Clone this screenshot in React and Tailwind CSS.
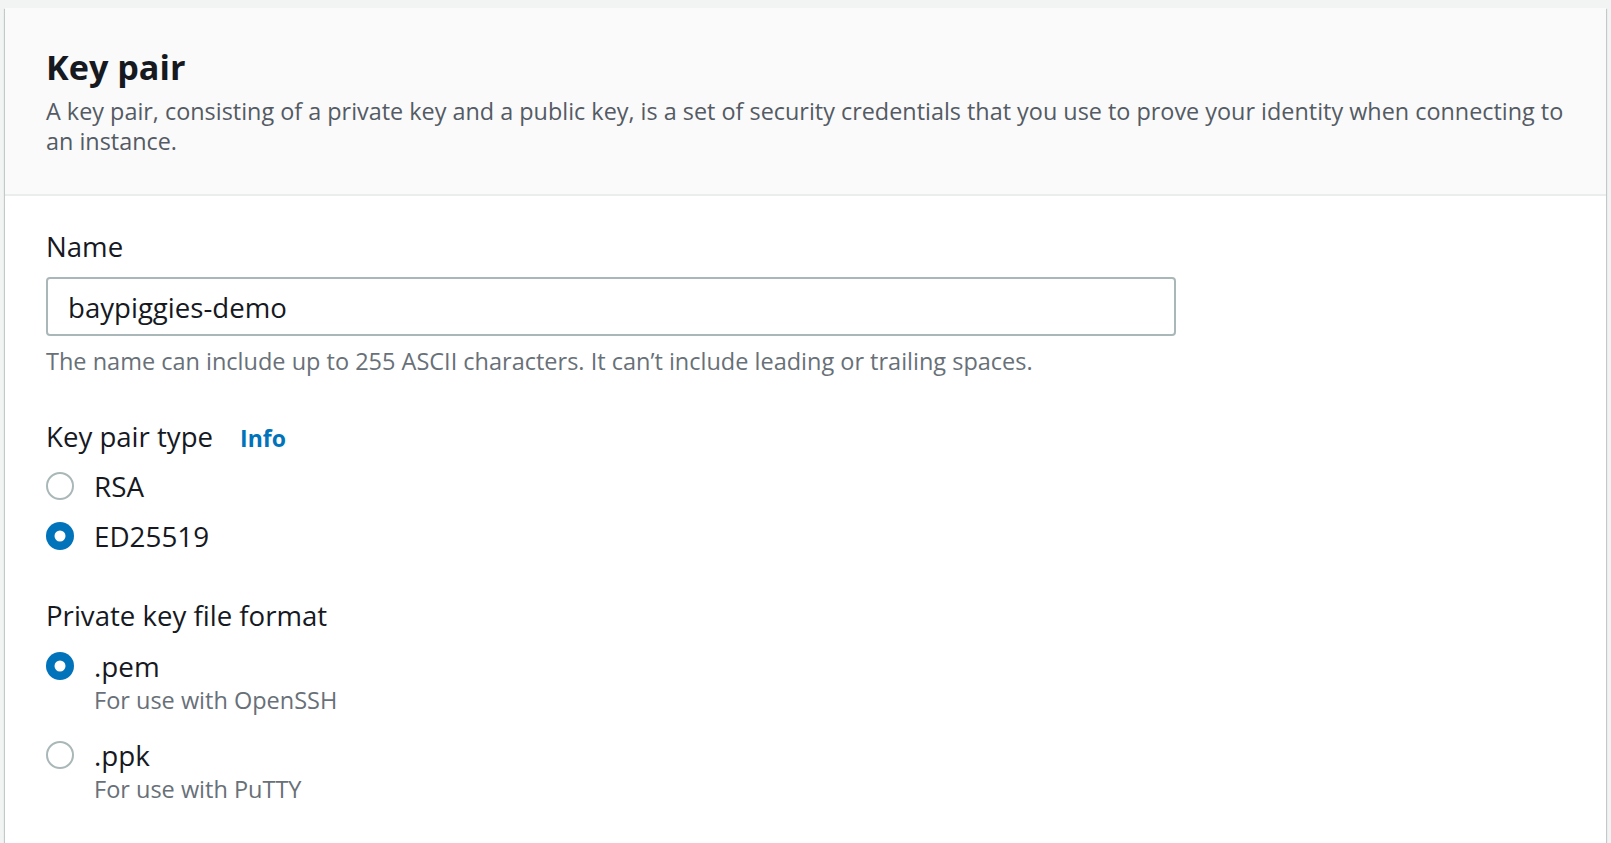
import { useState } from "react";

const font = { fontFamily: '"Open Sans", "Noto Sans", sans-serif' };

function Radio({ checked }) {
  return (
    <svg width="28" height="28" viewBox="0 0 28 28" className="shrink-0">
      {checked ? (
        <>
          <circle cx="14" cy="14" r="14" fill="#0073bb" />
          <circle cx="14" cy="14" r="5.5" fill="#ffffff" />
        </>
      ) : (
        <circle cx="14" cy="14" r="13" fill="#ffffff" stroke="#aab7b8" strokeWidth="2" />
      )}
    </svg>
  );
}

function Option({ label, description, checked, onSelect, className = "" }) {
  return (
    <div className={className}>
      <button type="button" onClick={onSelect} className="flex items-center h-[36px] cursor-pointer">
        <Radio checked={checked} />
        <span className="ml-[20px] text-[27.8px] leading-[36px] text-[#16191f]">{label}</span>
      </button>
      {description && (
        <div className="ml-[48px] mt-[1px] text-[23.5px] leading-[30px] text-[#687078]">{description}</div>
      )}
    </div>
  );
}

export default function App() {
  const [name, setName] = useState("baypiggies-demo");
  const [keyType, setKeyType] = useState("ED25519");
  const [format, setFormat] = useState("pem");

  return (
    <div className="min-h-screen bg-[#f2f3f3] px-[5px] pt-[8px] overflow-hidden" style={font}>
      <div className="bg-white shadow-[0_1px_1px_0_rgba(0,28,36,0.3),1px_1px_1px_0_rgba(0,28,36,0.15),-1px_1px_1px_0_rgba(0,28,36,0.15)]">
        {/* Header */}
        <div className="bg-[#fafafa] border-b-2 border-[#eaeded] pl-[41px] pr-[24px] pt-[38px] pb-[38px]">
          <h2 className="text-[34.2px] leading-[42px] font-bold text-[#16191f]">Key pair</h2>
          <p className="mt-[8px] text-[23.4px] leading-[30px] text-[#545b64]">
            A key pair, consisting of a private key and a public key, is a set of security credentials that you use to prove your identity when connecting to an instance.
          </p>
        </div>

        {/* Body */}
        <div className="pl-[41px] pr-[40px] pt-[32px] pb-[60px]">
          <label className="block text-[27.6px] leading-[36px] text-[#16191f]">Name</label>
          <input
            value={name}
            onChange={(e) => setName(e.target.value)}
            className="mt-[13px] block w-[1130px] h-[59px] border-2 border-[#aab7b8] rounded-[4px] bg-white pl-[20px] text-[27.6px] text-[#16191f] outline-none"
            style={font}
          />
          <div className="mt-[10px] text-[23.5px] leading-[30px] text-[#687078]">
            The name can include up to 255 ASCII characters. It can’t include leading or trailing spaces.
          </div>

          <div className="mt-[42px] flex items-baseline h-[36px]">
            <span className="text-[27.6px] leading-[36px] text-[#16191f]">Key pair type</span>
            <a href="#" className="ml-[27px] text-[23px] font-bold text-[#0073bb]">Info</a>
          </div>
          <div className="mt-[14px] flex flex-col gap-[14px]">
            <Option label="RSA" checked={keyType === "RSA"} onSelect={() => setKeyType("RSA")} />
            <Option label="ED25519" checked={keyType === "ED25519"} onSelect={() => setKeyType("ED25519")} />
          </div>

          <div className="mt-[43px] text-[27.6px] leading-[36px] text-[#16191f]">Private key file format</div>
          <div className="mt-[15px]">
            <Option
              label=".pem"
              description="For use with OpenSSH"
              checked={format === "pem"}
              onSelect={() => setFormat("pem")}
            />
            <Option
              className="mt-[22px]"
              label=".ppk"
              description="For use with PuTTY"
              checked={format === "ppk"}
              onSelect={() => setFormat("ppk")}
            />
          </div>
        </div>
      </div>
    </div>
  );
}
